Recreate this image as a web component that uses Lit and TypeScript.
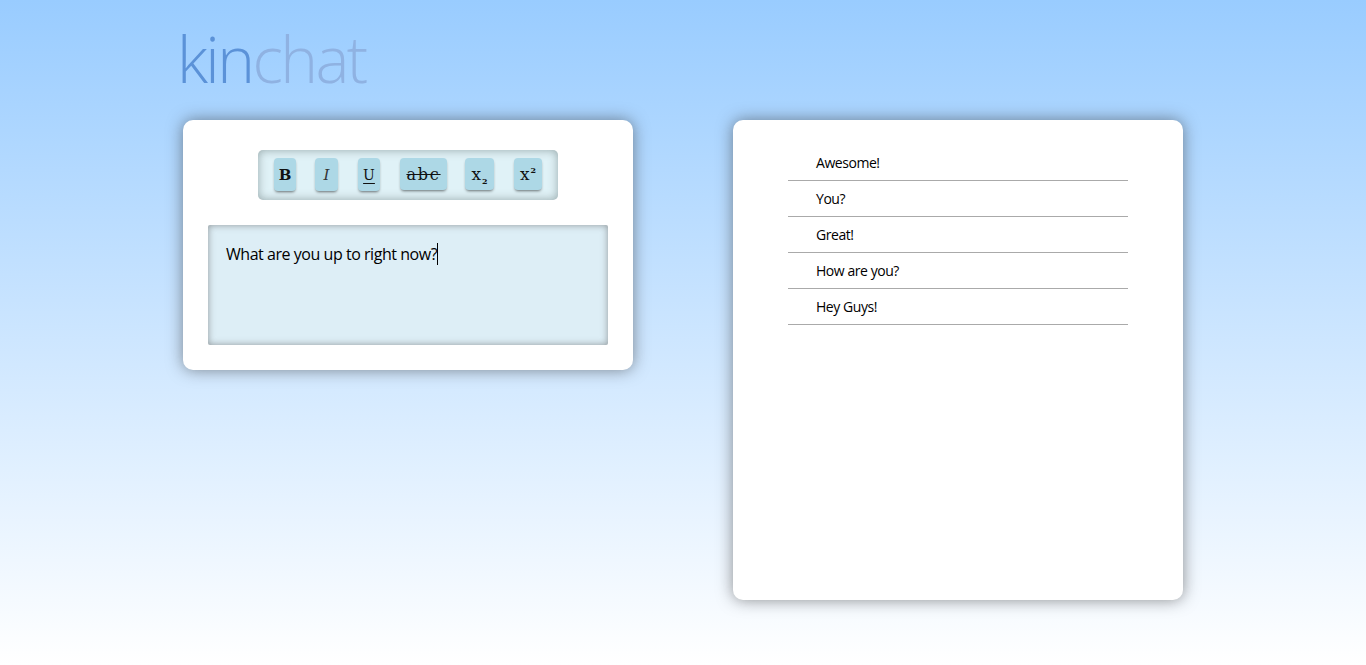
import { LitElement, html, css } from "lit";
import { customElement } from "lit/decorators.js";

const MESSAGES = ["Awesome!", "You?", "Great!", "How are you?", "Hey Guys!"];

@customElement("app-root")
export class AppRoot extends LitElement {
  static styles = css`
    :host {
      display: block;
      height: 665px;
      overflow: hidden;
      background: linear-gradient(to bottom, #99ccff 0%, #ffffff 100%);
      font-family: "Open Sans", "Noto Sans", sans-serif;
      color: #000;
    }
    .page {
      padding-left: 183px;
    }
    .logo {
      height: 120px;
      margin-left: -6px;
      font-size: 64px;
      font-weight: 300;
      letter-spacing: -2.6px;
      color: #5b92d8;
    }
    .logo-inner {
      display: block;
      line-height: 118px;
    }
    .logo .faded {
      color: #8fb2e2;
    }
    .columns {
      display: flex;
      align-items: flex-start;
      gap: 100px;
    }
    .panel {
      width: 450px;
      box-sizing: border-box;
      background: #fff;
      border-radius: 10px;
      box-shadow: 0 0 16px rgba(50, 50, 50, 0.55);
    }
    .composer {
      height: 250px;
      padding: 30px 25px 0;
      display: flex;
      flex-direction: column;
      align-items: center;
    }
    .toolbar {
      width: 300px;
      height: 50px;
      box-sizing: border-box;
      padding: 8px 0 0 16px;
      display: flex;
      align-items: flex-start;
      background: #e0f2f7;
      border-radius: 5px;
      box-shadow: inset 0 0 10px rgba(90, 105, 105, 0.55);
      flex: none;
    }
    .btn {
      flex: none;
      height: 32px;
      display: flex;
      align-items: center;
      justify-content: center;
      background: #add8e6;
      border-radius: 4px;
      box-shadow: 0 2px 3px -1px rgba(0, 0, 0, 0.55);
      font-family: "DejaVu Serif", serif;
      font-size: 17px;
      color: #111;
      padding: 0;
      border: 0;
    }
    .b { width: 22px; margin-right: 19px; font-weight: 700; font-size: 15px; height: 33px; }
    .i {
      width: 23px;
      margin-right: 20px;
      font-style: italic;
      font-size: 15px;
      font-weight: 400;
      color: #333;
      height: 33px;
    }
    .u {
      width: 22px;
      margin-right: 20px;
      font-size: 14px;
      text-decoration: underline;
      text-underline-offset: 3px;
      height: 33px;
    }
    .s {
      width: 47px;
      margin-right: 18px;
      font-size: 16px;
      letter-spacing: 1.8px;
      text-decoration: line-through;
    }
    .sub { width: 29px; margin-right: 20px; }
    .sup { width: 28px; }
    .btn sub, .btn sup {
      font-size: 8px;
      font-weight: 700;
      line-height: 0;
      margin-left: 1px;
    }
    .editor {
      margin-top: 25px;
      width: 400px;
      height: 120px;
      flex: none;
      box-sizing: border-box;
      padding: 18px;
      background: #ddeef6;
      box-shadow: inset 0 0 7px rgba(90, 90, 90, 0.6);
      border-radius: 2px;
      font-size: 16px;
      line-height: 22px;
      letter-spacing: -0.46px;
      white-space: nowrap;
    }
    .caret {
      display: inline-block;
      width: 1px;
      height: 22px;
      background: #000;
      vertical-align: top;
    }
    .feed {
      height: 480px;
      padding: 25px 55px 0;
    }
    .row {
      height: 36px;
      box-sizing: border-box;
      border-bottom: 1px solid #aaaaaa;
      padding-left: 28px;
      font-size: 14px;
      line-height: 36px;
      letter-spacing: -0.45px;
    }
  `;

  render() {
    return html`
      <div class="page">
        <div class="logo"><span class="logo-inner">kin<span class="faded">chat</span></span></div>
        <div class="columns">
          <section class="panel composer">
            <div class="toolbar">
              <button class="btn b">B</button>
              <button class="btn i">I</button>
              <button class="btn u">U</button>
              <button class="btn s">abc</button>
              <button class="btn sub"><span>x<sub>2</sub></span></button>
              <button class="btn sup"><span>x<sup>2</sup></span></button>
            </div>
            <div class="editor">What are you up to right now?<span class="caret"></span></div>
          </section>
          <section class="panel feed">
            ${MESSAGES.map((m) => html`<div class="row">${m}</div>`)}
          </section>
        </div>
      </div>
    `;
  }
}
